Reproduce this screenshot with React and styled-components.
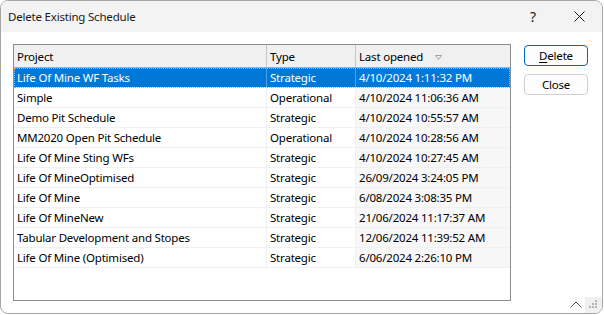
import styled, { createGlobalStyle } from "styled-components";

const GlobalStyle = createGlobalStyle`
  html, body {
    margin: 0;
    padding: 0;
    background: #ffffff;
  }
  body {
    font-family: "Segoe UI", "Noto Sans", sans-serif;
    font-size: 11.5px;
    letter-spacing: -0.2px;
    color: #000;
  }
`;

const Window = styled.div`
  position: relative;
  box-sizing: border-box;
  width: 603px;
  height: 314px;
  border: 1px solid #a6a6a6;
  border-radius: 8px;
  overflow: hidden;
  display: flex;
  flex-direction: column;
  background: #fff;
`;

const TitleBar = styled.div`
  height: 31px;
  flex: none;
  display: flex;
  align-items: center;
  background: #f3f3f3;
  padding-left: 7px;

  .title {
    flex: 1;
    color: #1a1a1a;
  }
`;

const CaptionButton = styled.div`
  width: 46px;
  height: 31px;
  display: flex;
  align-items: center;
  justify-content: center;
  font-size: 14px;
  color: #1a1a1a;
`;

const Body = styled.div`
  flex: 1;
  display: flex;
  align-items: flex-start;
  padding: 12px 0 0 12px;
`;

const ListBox = styled.div`
  box-sizing: border-box;
  width: 498px;
  height: 257px;
  border: 1px solid #8c8c8c;
  background: #fff;
  display: flex;
  flex-direction: column;
`;

const Row = styled.div`
  display: grid;
  grid-template-columns: 253px 89px 154px;
  height: ${(p) => (p.$header ? "23px" : "20px")};
  box-sizing: border-box;
  border-bottom: 1px solid ${(p) => (p.$header ? "#a8a8a8" : "#f0f0f0")};
  background: ${(p) => (p.$header ? "#f0f0f0" : p.$selected ? "#0078d7" : "#fff")};
  color: ${(p) => (p.$selected ? "#fff" : "#000")};
  outline: ${(p) => (p.$selected ? "1px dotted #f0a050" : "none")};
  outline-offset: -1px;
`;

const Cell = styled.div`
  display: flex;
  align-items: center;
  padding-left: 3px;
  white-space: nowrap;
  overflow: hidden;
  border-right: 1px solid
    ${(p) =>
      p.$last ? "transparent" : p.$header ? "#c6c6c6" : p.$selected ? "#4aa0e6" : "#f0f0f0"};
  background: ${(p) => (p.$sorted && !p.$selected && !p.$header ? "#f7f7f7" : "transparent")};
`;

const SortArrow = styled.svg`
  margin-left: 12px;
  margin-top: 2px;
`;

const Side = styled.div`
  display: flex;
  flex-direction: column;
  gap: 8px;
  margin-left: 13px;
  padding-top: 1px;
`;

const Button = styled.div`
  box-sizing: border-box;
  width: 64px;
  height: 21px;
  display: flex;
  align-items: center;
  justify-content: center;
  border: 1px solid ${(p) => (p.$default ? "#0067c0" : "#d0d0d0")};
  border-radius: 4px;
  background: #fdfdfd;
  color: #000;

  u {
    text-decoration: underline;
    text-underline-offset: 2px;
  }
`;

const Chevron = styled.svg`
  position: absolute;
  right: 20px;
  bottom: 5px;
`;

const Grip = styled.div`
  position: absolute;
  right: 0;
  bottom: 0;
  width: 17px;
  height: 16px;
  background: #f0f0f0;
`;

const rows = [
  ["Life Of Mine WF Tasks", "Strategic", "4/10/2024 1:11:32 PM"],
  ["Simple", "Operational", "4/10/2024 11:06:36 AM"],
  ["Demo Pit Schedule", "Strategic", "4/10/2024 10:55:57 AM"],
  ["MM2020 Open Pit Schedule", "Operational", "4/10/2024 10:28:56 AM"],
  ["Life Of Mine Sting WFs", "Strategic", "4/10/2024 10:27:45 AM"],
  ["Life Of MineOptimised", "Strategic", "26/09/2024 3:24:05 PM"],
  ["Life Of Mine", "Strategic", "6/08/2024 3:08:35 PM"],
  ["Life Of MineNew", "Strategic", "21/06/2024 11:17:37 AM"],
  ["Tabular Development and Stopes", "Strategic", "12/06/2024 11:39:52 AM"],
  ["Life Of Mine (Optimised)", "Strategic", "6/06/2024 2:26:10 PM"],
];

const gripDots = [
  [10, 3],
  [7, 6],
  [10, 6],
  [4, 9],
  [7, 9],
  [10, 9],
];

const App = () => {
  return (
    <>
      <GlobalStyle />
      <Window>
        <TitleBar>
          <span className="title">Delete Existing Schedule</span>
          <CaptionButton>?</CaptionButton>
          <CaptionButton>
            <svg width="11" height="11" viewBox="0 0 11 11">
              <path d="M0.5 0.5L10.5 10.5M10.5 0.5L0.5 10.5" stroke="#1a1a1a" strokeWidth="1" />
            </svg>
          </CaptionButton>
        </TitleBar>
        <Body>
          <ListBox>
            <Row $header>
              <Cell $header>Project</Cell>
              <Cell $header>Type</Cell>
              <Cell $header $last>
                Last opened
                <SortArrow width="7" height="5" viewBox="0 0 7 5">
                  <path d="M0.5 0.5H6.5L3.5 4.5Z" fill="none" stroke="#a0a0a0" strokeWidth="1" />
                </SortArrow>
              </Cell>
            </Row>
            {rows.map((r, i) => (
              <Row key={i} $selected={i === 0}>
                <Cell $selected={i === 0}>{r[0]}</Cell>
                <Cell $selected={i === 0}>{r[1]}</Cell>
                <Cell $selected={i === 0} $sorted $last>
                  {r[2]}
                </Cell>
              </Row>
            ))}
          </ListBox>
          <Side>
            <Button $default>
              <span>
                <u>D</u>elete
              </span>
            </Button>
            <Button>Close</Button>
          </Side>
        </Body>
        <Chevron width="12" height="7" viewBox="0 0 12 7">
          <path d="M0.5 6.5L6 1L11.5 6.5" fill="none" stroke="#555" strokeWidth="1" />
        </Chevron>
        <Grip>
          <svg width="17" height="16">
            {gripDots.map(([x, y], i) => (
              <rect key={i} x={x} y={y} width="2" height="2" fill="#b4b4b4" />
            ))}
          </svg>
        </Grip>
      </Window>
    </>
  );
};

export default App;
